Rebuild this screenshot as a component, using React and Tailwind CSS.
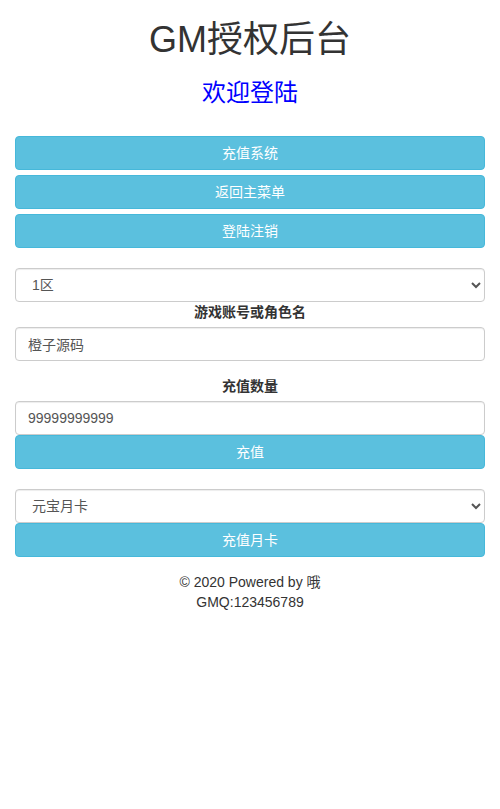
import { useState } from 'react';

const font = { fontFamily: '"Liberation Sans", "Noto Sans CJK SC", sans-serif' };

const btn =
  'block w-full h-[34px] rounded-[4px] border border-[#46b8da] bg-[#5bc0de] text-white text-[14px] leading-[20px] text-center';
const field =
  'block w-full h-[34px] rounded-[4px] border border-[#ccc] bg-white px-3 text-[14px] text-[#555] leading-[20px] shadow-[inset_0_1px_1px_rgba(0,0,0,0.075)] outline-none';

export default function App() {
  const [zone, setZone] = useState('1');
  const [account, setAccount] = useState('橙子源码');
  const [amount, setAmount] = useState('99999999999');
  const [card, setCard] = useState('yb');

  return (
    <div className="min-h-[809px] bg-white text-[#333] text-[14px] leading-[20px]" style={font}>
      <div className="px-[15px]">
        {/* Header */}
        <h1 className="pt-[20px] text-center text-[36px] leading-[40px] font-normal">GM授权后台</h1>
        <h3 className="mt-[20px] text-center text-[24px] leading-[26px] text-[#0000ff] font-normal">欢迎登陆</h3>

        {/* Menu */}
        <div className="mt-[30px] flex flex-col gap-[5px]">
          <button className={btn}>充值系统</button>
          <button className={btn}>返回主菜单</button>
          <button className={btn}>登陆注销</button>
        </div>

        {/* Recharge form */}
        <div className="mt-[20px]">
          <select value={zone} onChange={(e) => setZone(e.target.value)} className={field}>
            <option value="1">1区</option>
            <option value="2">2区</option>
          </select>
          <label className="block text-center font-bold mb-[5px]">游戏账号或角色名</label>
          <input value={account} onChange={(e) => setAccount(e.target.value)} className={field} />

          <label className="block text-center font-bold mt-[15px] mb-[5px]">充值数量</label>
          <input value={amount} onChange={(e) => setAmount(e.target.value)} className={field} />
          <button className={btn}>充值</button>
        </div>

        {/* Month card */}
        <div className="mt-[20px]">
          <select value={card} onChange={(e) => setCard(e.target.value)} className={field}>
            <option value="yb">元宝月卡</option>
          </select>
          <button className={btn}>充值月卡</button>
        </div>

        {/* Footer */}
        <div className="mt-[15px] text-center">
          <p>© 2020 Powered by 哦</p>
          <p>GMQ:123456789</p>
        </div>
      </div>
    </div>
  );
}
